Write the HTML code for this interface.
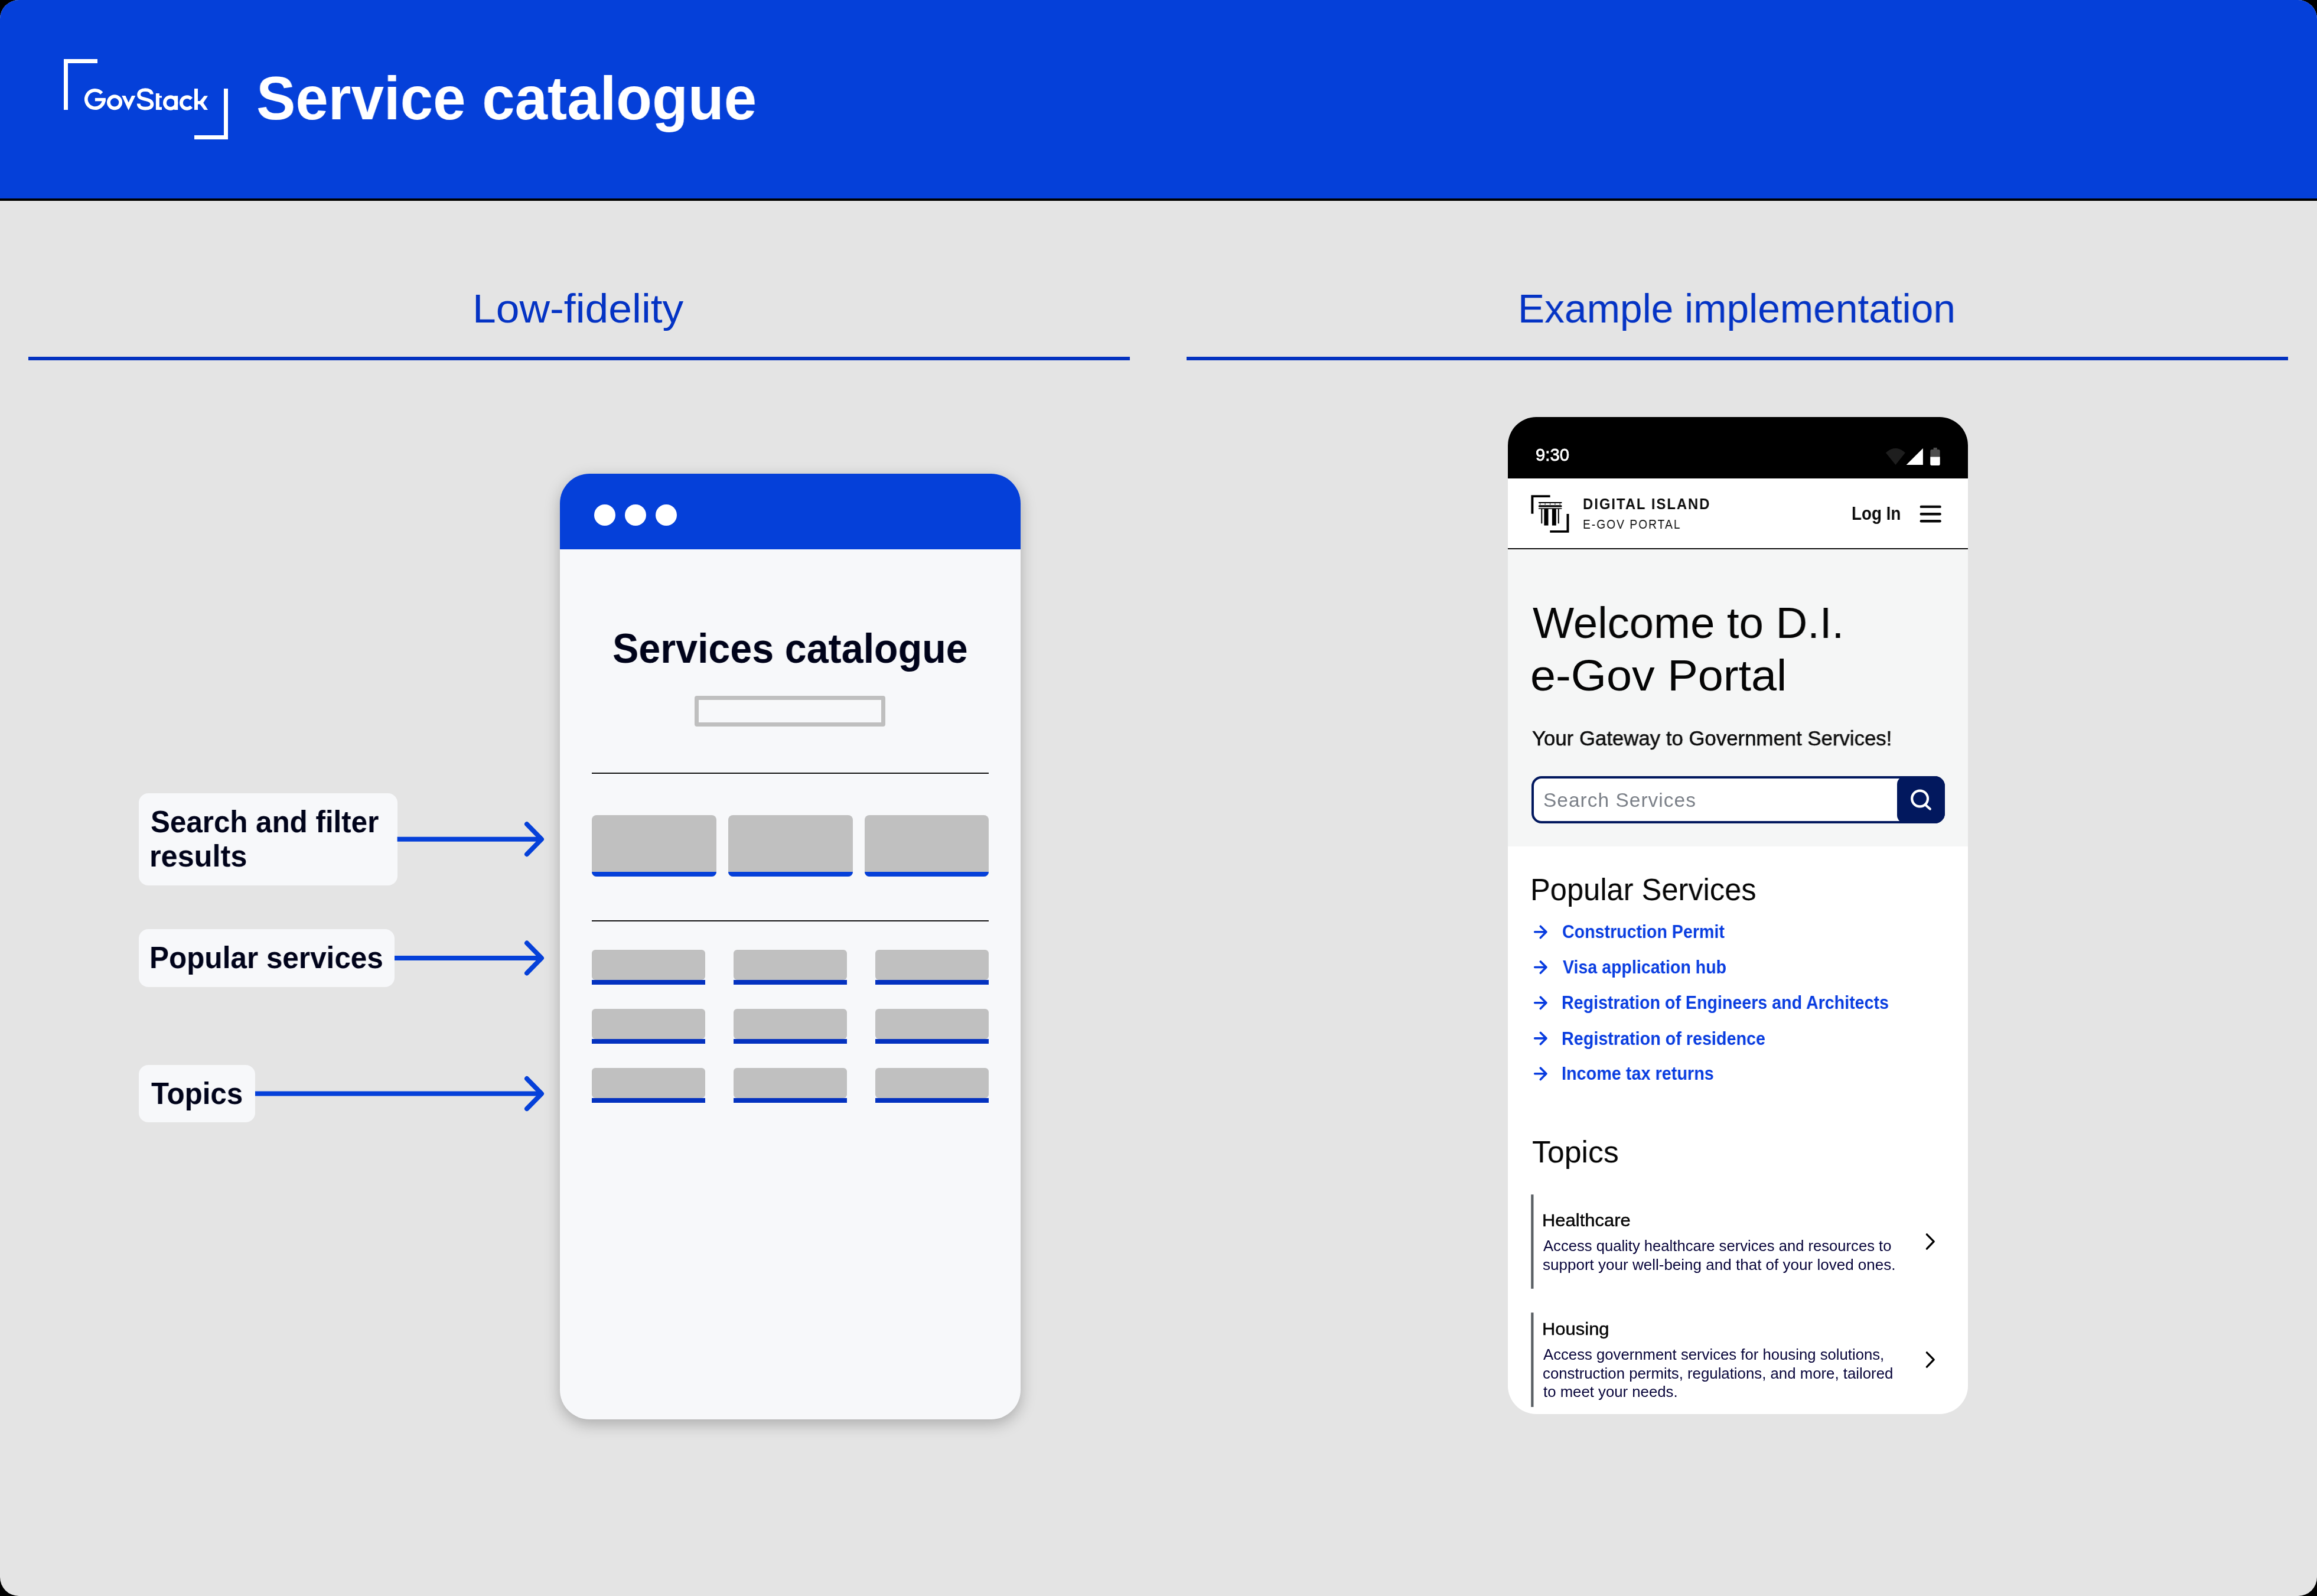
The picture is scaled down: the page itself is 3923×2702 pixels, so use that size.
<!DOCTYPE html>
<html><head><meta charset="utf-8"><title>Service catalogue</title>
<style>
html,body{margin:0;padding:0;background:#000;}
body{width:3923px;height:2702px;position:relative;overflow:hidden;font-family:"Liberation Sans",sans-serif;}
#frame{position:absolute;left:0;top:0;width:3923px;height:2702px;border-radius:32px;background:#e4e4e4;overflow:hidden;}
.t{position:absolute;white-space:nowrap;transform-origin:0 0;will-change:transform;}
svg{position:absolute;overflow:visible;}
</style></head><body><div id="frame">

<div style="position:absolute;left:0px;top:0px;width:3923px;height:336px;background:#0540d9;"></div>
<div style="position:absolute;left:0px;top:336px;width:3923px;height:4px;background:#000;"></div>
<div style="position:absolute;left:108px;top:100px;width:57px;height:7.299999999999997px;background:#fff;"></div>
<div style="position:absolute;left:108px;top:100px;width:7.299999999999997px;height:85.6px;background:#fff;"></div>
<div style="position:absolute;left:378.7px;top:150px;width:7.300000000000011px;height:86px;background:#fff;"></div>
<div style="position:absolute;left:329px;top:228.7px;width:57px;height:7.300000000000011px;background:#fff;"></div>
<svg style="left:0;top:0" width="3923" height="2702"><g fill="none" stroke="#fff" stroke-width="5.8"><path d="M172.19 157.97A15.1 15.1 0 1 0 176 168"/><circle cx="194.05" cy="173.3" r="10.15"/><path d="M256.8 159.6C256.8 154.6 251.8 152.2 245.9 152.2C239.6 152.2 235.1 155.2 235.1 160.2C235.1 165.6 240.3 166.6 246.2 168.0C252.6 169.5 257.4 171.2 257.4 176.6C257.4 181.6 252.4 183.7 246.0 183.7C239.2 183.7 234.7 180.6 234.7 175.4"/><circle cx="288.7" cy="174" r="9.8"/><path d="M323.98 167.44A9.8 9.8 0 1 0 323.98 180.56"/></g><g fill="#fff"><rect x="160.9" y="165.9" width="18" height="5.4"/><path d="M206.2 162.1H212.4L217.6 173.6L223.1 162.1H229.3L217.6 186.8Z"/><path d="M263.9 158H269.8V162.2H274V165.5H269.8V181.2H274V186H263.9Z"/><rect x="295.1" y="162.2" width="6.1" height="23.8"/><rect x="329" y="150" width="6" height="36"/><path d="M335 171.1H338.6L345.8 162.2H352L344.2 174L352 186H345.8L338.6 176.5H335Z"/></g></svg>
<div style="position:absolute;left:48px;top:604px;width:1865px;height:6px;background:#0432c0;"></div>
<div style="position:absolute;left:2009px;top:604px;width:1865px;height:6px;background:#0432c0;"></div>
<div style="position:absolute;left:948px;top:802px;width:780px;height:1601px;border-radius:50px;background:#f7f8fa;box-shadow:0 8px 26px rgba(0,0,0,0.25);overflow:hidden;">
<div style="position:absolute;left:0px;top:0px;width:780px;height:127.5px;background:#0540d9;"></div>
<div style="position:absolute;left:58px;top:51.7px;width:36px;height:36px;border-radius:50%;background:#fff"></div>
<div style="position:absolute;left:110px;top:51.7px;width:36px;height:36px;border-radius:50%;background:#fff"></div>
<div style="position:absolute;left:162px;top:51.7px;width:36px;height:36px;border-radius:50%;background:#fff"></div>
<div style="position:absolute;left:228.3px;top:376px;width:323px;height:51.6px;box-sizing:border-box;border:7px solid #bfbfbf;border-radius:4px"></div>
<div style="position:absolute;left:54px;top:505.5px;width:672px;height:2.0px;background:#111;"></div>
<div style="position:absolute;left:54px;top:755.5px;width:672px;height:2.0px;background:#111;"></div>
<div style="position:absolute;left:54px;top:578px;width:210.5px;height:104px;border-radius:8px;background:#c0c0c0;overflow:hidden"><div style="position:absolute;left:0;bottom:0;width:100%;height:8.2px;background:#0540d9"></div></div>
<div style="position:absolute;left:285px;top:578px;width:210.5px;height:104px;border-radius:8px;background:#c0c0c0;overflow:hidden"><div style="position:absolute;left:0;bottom:0;width:100%;height:8.2px;background:#0540d9"></div></div>
<div style="position:absolute;left:515.5px;top:578px;width:210.5px;height:104px;border-radius:8px;background:#c0c0c0;overflow:hidden"><div style="position:absolute;left:0;bottom:0;width:100%;height:8.2px;background:#0540d9"></div></div>
<div style="position:absolute;left:54px;top:806px;width:192px;height:51px;border-radius:6px;background:#c0c0c0"></div>
<div style="position:absolute;left:54px;top:857.3px;width:192px;height:8.200000000000045px;background:#0432c0;"></div>
<div style="position:absolute;left:294px;top:806px;width:192px;height:51px;border-radius:6px;background:#c0c0c0"></div>
<div style="position:absolute;left:294px;top:857.3px;width:192px;height:8.200000000000045px;background:#0432c0;"></div>
<div style="position:absolute;left:534px;top:806px;width:192px;height:51px;border-radius:6px;background:#c0c0c0"></div>
<div style="position:absolute;left:534px;top:857.3px;width:192px;height:8.200000000000045px;background:#0432c0;"></div>
<div style="position:absolute;left:54px;top:906px;width:192px;height:51px;border-radius:6px;background:#c0c0c0"></div>
<div style="position:absolute;left:54px;top:957.3px;width:192px;height:8.200000000000045px;background:#0432c0;"></div>
<div style="position:absolute;left:294px;top:906px;width:192px;height:51px;border-radius:6px;background:#c0c0c0"></div>
<div style="position:absolute;left:294px;top:957.3px;width:192px;height:8.200000000000045px;background:#0432c0;"></div>
<div style="position:absolute;left:534px;top:906px;width:192px;height:51px;border-radius:6px;background:#c0c0c0"></div>
<div style="position:absolute;left:534px;top:957.3px;width:192px;height:8.200000000000045px;background:#0432c0;"></div>
<div style="position:absolute;left:54px;top:1006px;width:192px;height:51px;border-radius:6px;background:#c0c0c0"></div>
<div style="position:absolute;left:54px;top:1057.3px;width:192px;height:8.200000000000045px;background:#0432c0;"></div>
<div style="position:absolute;left:294px;top:1006px;width:192px;height:51px;border-radius:6px;background:#c0c0c0"></div>
<div style="position:absolute;left:294px;top:1057.3px;width:192px;height:8.200000000000045px;background:#0432c0;"></div>
<div style="position:absolute;left:534px;top:1006px;width:192px;height:51px;border-radius:6px;background:#c0c0c0"></div>
<div style="position:absolute;left:534px;top:1057.3px;width:192px;height:8.200000000000045px;background:#0432c0;"></div>
</div>
<div style="position:absolute;left:235px;top:1343px;width:437.6px;height:155.70000000000005px;border-radius:16px;background:#f7f8fa"></div>
<div style="position:absolute;left:235px;top:1573px;width:433px;height:97.5px;border-radius:16px;background:#f7f8fa"></div>
<div style="position:absolute;left:235px;top:1803.4px;width:197px;height:97.0px;border-radius:16px;background:#f7f8fa"></div>
<svg style="left:0;top:0" width="3923" height="2702">
<path d="M672.6 1420.7H916" stroke="#0540d9" stroke-width="8" fill="none"/>
<path d="M892 1395.2L917 1420.7L892 1446.2" stroke="#0540d9" stroke-width="8" fill="none" stroke-linecap="round" stroke-linejoin="round"/>
<path d="M668 1622H916" stroke="#0540d9" stroke-width="8" fill="none"/>
<path d="M892 1596.5L917 1622L892 1647.5" stroke="#0540d9" stroke-width="8" fill="none" stroke-linecap="round" stroke-linejoin="round"/>
<path d="M432 1851.6H916" stroke="#0540d9" stroke-width="8" fill="none"/>
<path d="M892 1826.1L917 1851.6L892 1877.1" stroke="#0540d9" stroke-width="8" fill="none" stroke-linecap="round" stroke-linejoin="round"/>
</svg>
<div style="position:absolute;left:2552.5px;top:705.6px;width:779.7px;height:1688.3px;border-radius:48px;background:#fff;overflow:hidden;">
<div style="position:absolute;left:0px;top:0px;width:779.7px;height:104.1px;background:#000;"></div>
<div style="position:absolute;left:0px;top:222.4px;width:779.7px;height:2.0px;background:#0b0b0b;"></div>
<div style="position:absolute;left:0px;top:225.4px;width:779.7px;height:502.20000000000005px;background:#f5f6f6;"></div>
</div>
<svg style="left:0;top:0" width="3923" height="2702">
<path d="M3192.9 766.5 Q3209.4 751.5 3225.8 766.5 L3209.5 787 Z" fill="#1e1e1e"/>
<path d="M3227.6 787 L3255.9 787 L3255.9 758.9 Z" fill="#fff"/>
<rect x="3273.6" y="757.9" width="6.1" height="4" fill="#4d4d4d"/>
<rect x="3268.3" y="761" width="16.3" height="27" rx="2.5" fill="#4d4d4d"/>
<path d="M3268.3 773.5 H3284.6 V785.5 Q3284.6 788 3282.1 788 H3270.8 Q3268.3 788 3268.3 785.5 Z" fill="#fff"/>
<g fill="#000">
<path d="M2592.4 838.3H2624.6V841.9H2596.4V869.8H2592.4Z"/>
<path d="M2652.5 870.1H2656.5V901.7H2624.3V898H2652.5Z"/>
<rect x="2604.8" y="850" width="39.8" height="1.9" rx="0.9"/>
<circle cx="2607.6" cy="853.3" r="0.9"/>
<circle cx="2616.1" cy="853.3" r="0.9"/>
<circle cx="2624.6" cy="853.3" r="0.9"/>
<circle cx="2632.9" cy="853.3" r="0.9"/>
<circle cx="2641.2" cy="853.3" r="0.9"/>
<rect x="2604.8" y="855.2" width="39.8" height="3.4" rx="1.7"/>
<rect x="2604.8" y="860.2" width="39.8" height="1.6" rx="0.8"/>
<rect x="2609.3" y="861" width="2" height="25.5" rx="1"/><rect x="2614.4" y="861" width="7.1" height="28.6"/>
<rect x="2627.9" y="861" width="6.9" height="28.6"/><rect x="2637.8" y="861" width="2" height="25.5" rx="1"/>
</g>
<path d="M3252.8 857.9H3284.6" stroke="#0b0b0b" stroke-width="4.4" stroke-linecap="round"/>
<path d="M3252.8 870.2H3284.6" stroke="#0b0b0b" stroke-width="4.4" stroke-linecap="round"/>
<path d="M3252.8 882.2H3284.6" stroke="#0b0b0b" stroke-width="4.4" stroke-linecap="round"/>
</svg>
<div style="position:absolute;left:2593.1px;top:1313.8px;width:699.6px;height:79.9px;box-sizing:border-box;border:4px solid #02185e;border-radius:17px;background:#fff">
<div style="position:absolute;left:615.3px;top:-4px;width:80.3px;height:79.9px;background:#02185e;border-radius:14px 17px 17px 14px"></div>
</div>
<svg style="left:0;top:0" width="3923" height="2702">
<circle cx="3250.6" cy="1352" r="13.4" stroke="#fff" stroke-width="4.2" fill="none"/>
<path d="M3261 1363.5 L3267.8 1369.5" stroke="#fff" stroke-width="4.2" stroke-linecap="round"/>
<path d="M2598.7 1577.8H2617.5M2608.3 1568.2L2618 1577.8L2608.3 1587.6" stroke="#083ce0" stroke-width="3.6" fill="none" stroke-linecap="round" stroke-linejoin="round"/>
<path d="M2598.7 1637.5H2617.5M2608.3 1627.9L2618 1637.5L2608.3 1647.3" stroke="#083ce0" stroke-width="3.6" fill="none" stroke-linecap="round" stroke-linejoin="round"/>
<path d="M2598.7 1697.7H2617.5M2608.3 1688.1000000000001L2618 1697.7L2608.3 1707.5" stroke="#083ce0" stroke-width="3.6" fill="none" stroke-linecap="round" stroke-linejoin="round"/>
<path d="M2598.7 1757.9H2617.5M2608.3 1748.3000000000002L2618 1757.9L2608.3 1767.7" stroke="#083ce0" stroke-width="3.6" fill="none" stroke-linecap="round" stroke-linejoin="round"/>
<path d="M2598.7 1817.7H2617.5M2608.3 1808.1000000000001L2618 1817.7L2608.3 1827.5" stroke="#083ce0" stroke-width="3.6" fill="none" stroke-linecap="round" stroke-linejoin="round"/>
<rect x="2592.2" y="2022.3" width="4.3" height="159.5" fill="#5c6166"/>
<rect x="2592.2" y="2222.2" width="4.3" height="159.8" fill="#5c6166"/>
<path d="M3262.4 2089.9L3274.2 2101.9L3262.4 2114.1" stroke="#000" stroke-width="3.4" fill="none" stroke-linecap="round" stroke-linejoin="round"/>
<path d="M3262.4 2289.9L3274.2 2301.9L3262.4 2314.1" stroke="#000" stroke-width="3.4" fill="none" stroke-linecap="round" stroke-linejoin="round"/>
</svg>
<div class="t" style="left:434.12px;top:114.53px;font-size:103.93px;line-height:103.93px;font-weight:700;color:#ffffff;letter-spacing:0px;transform:scaleX(0.9585)">Service catalogue</div>
<div class="t" style="left:799.95px;top:488.47px;font-size:68.32px;line-height:68.32px;font-weight:400;color:#0433c4;letter-spacing:0px;transform:scaleX(1.0458)">Low-fidelity</div>
<div class="t" style="left:2570.23px;top:488.42px;font-size:68.02px;line-height:68.02px;font-weight:400;color:#0433c4;letter-spacing:0px;transform:scaleX(0.9951)">Example implementation</div>
<div class="t" style="left:1037.32px;top:1063.29px;font-size:70.06px;line-height:70.06px;font-weight:700;color:#00031a;letter-spacing:0px;transform:scaleX(0.9479)">Services catalogue</div>
<div class="t" style="left:254.85px;top:1366.01px;font-size:51.02px;line-height:51.02px;font-weight:700;color:#00031a;letter-spacing:0px;transform:scaleX(0.9662)">Search and filter</div>
<div class="t" style="left:252.84px;top:1424.41px;font-size:51.02px;line-height:51.02px;font-weight:700;color:#00031a;letter-spacing:0px;transform:scaleX(0.9882)">results</div>
<div class="t" style="left:252.78px;top:1594.98px;font-size:52.47px;line-height:52.47px;font-weight:700;color:#00031a;letter-spacing:0px;transform:scaleX(0.9425)">Popular services</div>
<div class="t" style="left:255.61px;top:1824.88px;font-size:52.47px;line-height:52.47px;font-weight:700;color:#00031a;letter-spacing:0px;transform:scaleX(0.9399)">Topics</div>
<div class="t" style="left:2600.19px;top:756.39px;font-size:29.07px;line-height:29.07px;font-weight:400;color:#ffffff;letter-spacing:0px;-webkit-text-stroke:0.8px #ffffff;transform:scaleX(1.0074)">9:30</div>
<div class="t" style="left:2679.76px;top:839.93px;font-size:26.31px;line-height:26.31px;font-weight:700;color:#0b0b0b;letter-spacing:2.2px;transform:scaleX(0.9068)">DIGITAL ISLAND</div>
<div class="t" style="left:2679.86px;top:875.71px;font-size:22.67px;line-height:22.67px;font-weight:400;color:#0b0b0b;letter-spacing:2.4px;transform:scaleX(0.8464)">E-GOV PORTAL</div>
<div class="t" style="left:3135.24px;top:854.44px;font-size:30.67px;line-height:30.67px;font-weight:700;color:#0b0b0b;letter-spacing:0px;transform:scaleX(0.9057)">Log In</div>
<div class="t" style="left:2594.60px;top:1017.28px;font-size:74.57px;line-height:74.57px;font-weight:400;color:#050505;letter-spacing:0px;transform:scaleX(0.9966)">Welcome to D.I.</div>
<div class="t" style="left:2591.48px;top:1105.78px;font-size:74.57px;line-height:74.57px;font-weight:400;color:#050505;letter-spacing:0px;transform:scaleX(1.0376)">e-Gov Portal</div>
<div class="t" style="left:2593.60px;top:1233.07px;font-size:34.88px;line-height:34.88px;font-weight:400;color:#0b0b0b;letter-spacing:0px;-webkit-text-stroke:0.55px #0b0b0b;transform:scaleX(0.9970)">Your Gateway to Government Services!</div>
<div class="t" style="left:2612.57px;top:1338.07px;font-size:32.99px;line-height:32.99px;font-weight:400;color:#7b8088;letter-spacing:1.0px;transform:scaleX(1.0147)">Search Services</div>
<div class="t" style="left:2590.67px;top:1481.34px;font-size:51.45px;line-height:51.45px;font-weight:400;color:#050505;letter-spacing:0px;transform:scaleX(0.9841)">Popular Services</div>
<div class="t" style="left:2645.26px;top:1562.46px;font-size:30.52px;line-height:30.52px;font-weight:700;color:#083ce0;letter-spacing:0px;transform:scaleX(0.9370)">Construction Permit</div>
<div class="t" style="left:2646.19px;top:1622.16px;font-size:30.52px;line-height:30.52px;font-weight:700;color:#083ce0;letter-spacing:0px;transform:scaleX(0.9353)">Visa application hub</div>
<div class="t" style="left:2644.32px;top:1682.36px;font-size:30.52px;line-height:30.52px;font-weight:700;color:#083ce0;letter-spacing:0px;transform:scaleX(0.9378)">Registration of Engineers and Architects</div>
<div class="t" style="left:2644.31px;top:1742.56px;font-size:30.52px;line-height:30.52px;font-weight:700;color:#083ce0;letter-spacing:0px;transform:scaleX(0.9419)">Registration of residence</div>
<div class="t" style="left:2644.31px;top:1802.36px;font-size:30.52px;line-height:30.52px;font-weight:700;color:#083ce0;letter-spacing:0px;transform:scaleX(0.9441)">Income tax returns</div>
<div class="t" style="left:2593.62px;top:1924.08px;font-size:52.47px;line-height:52.47px;font-weight:400;color:#050505;letter-spacing:0px;transform:scaleX(0.9870)">Topics</div>
<div class="t" style="left:2611.32px;top:2050.83px;font-size:30.09px;line-height:30.09px;font-weight:400;color:#050505;letter-spacing:0px;-webkit-text-stroke:0.45px #050505;transform:scaleX(1.0298)">Healthcare</div>
<div class="t" style="left:2613.20px;top:2096.77px;font-size:25.44px;line-height:25.44px;font-weight:400;color:#07043a;letter-spacing:0px;transform:scaleX(1.0070)">Access quality healthcare services and resources to</div>
<div class="t" style="left:2612.17px;top:2128.77px;font-size:25.44px;line-height:25.44px;font-weight:400;color:#07043a;letter-spacing:0px;transform:scaleX(1.0231)">support your well-being and that of your loved ones.</div>
<div class="t" style="left:2611.32px;top:2234.93px;font-size:30.09px;line-height:30.09px;font-weight:400;color:#050505;letter-spacing:0px;-webkit-text-stroke:0.45px #050505;transform:scaleX(1.0292)">Housing</div>
<div class="t" style="left:2613.20px;top:2281.07px;font-size:25.44px;line-height:25.44px;font-weight:400;color:#07043a;letter-spacing:0px;transform:scaleX(1.0106)">Access government services for housing solutions,</div>
<div class="t" style="left:2612.18px;top:2312.87px;font-size:25.44px;line-height:25.44px;font-weight:400;color:#07043a;letter-spacing:0px;transform:scaleX(1.0136)">construction permits, regulations, and more, tailored</div>
<div class="t" style="left:2613.20px;top:2343.77px;font-size:25.44px;line-height:25.44px;font-weight:400;color:#07043a;letter-spacing:0px;transform:scaleX(1.0122)">to meet your needs.</div>
</div></body></html>
